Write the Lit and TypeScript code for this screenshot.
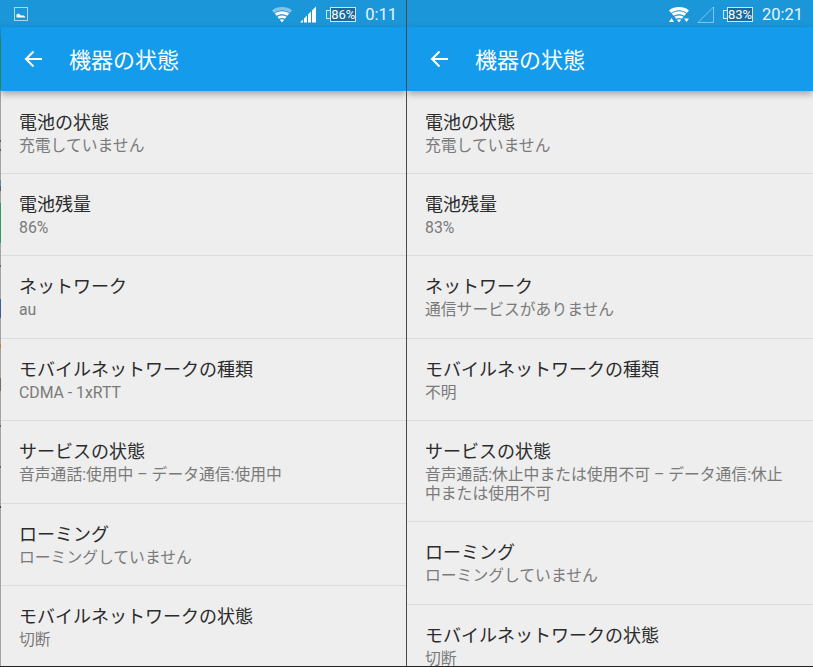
import { LitElement, html, css, svg } from 'lit';
import { customElement, property } from 'lit/decorators.js';

interface Row {
  title: string;
  value: string;
}

const LEFT: Row[] = [
  { title: '電池の状態', value: '充電していません' },
  { title: '電池残量', value: '86%' },
  { title: 'ネットワーク', value: 'au' },
  { title: 'モバイルネットワークの種類', value: 'CDMA - 1xRTT' },
  { title: 'サービスの状態', value: '音声通話:使用中 – データ通信:使用中' },
  { title: 'ローミング', value: 'ローミングしていません' },
  { title: 'モバイルネットワークの状態', value: '切断' },
];

const RIGHT: Row[] = [
  { title: '電池の状態', value: '充電していません' },
  { title: '電池残量', value: '83%' },
  { title: 'ネットワーク', value: '通信サービスがありません' },
  { title: 'モバイルネットワークの種類', value: '不明' },
  { title: 'サービスの状態', value: '音声通話:休止中または使用不可 – データ通信:休止中または使用不可' },
  { title: 'ローミング', value: 'ローミングしていません' },
  { title: 'モバイルネットワークの状態', value: '切断' },
];

const wifiBands = svg`
  <path d="M3.8 8.6C8 5.6 14 5.6 18.2 8.6L16.4 10.8C13 8.6 9 8.6 5.6 10.8Z" fill="#fff"/>
  <path d="M6.4 11.8C9.2 10 12.8 10 15.6 11.8L14 13.8C12 12.6 10 12.6 8 13.8Z" fill="#fff"/>
  <path d="M8.8 14.8C10.2 14 11.8 14 13.2 14.8L11 17.6Z" fill="#fff"/>`;

@customElement('status-screen')
export class StatusScreen extends LitElement {
  static styles = css`
    :host {
      display: block;
      position: relative;
      height: 667px;
      overflow: hidden;
      background: #eeeeee;
      font-family: Roboto, 'Noto Sans CJK JP', sans-serif;
      border-left: 1px solid #4a4a4a;
      border-bottom: 1px solid #222;
      box-sizing: border-box;
    }

    :host([first]) {
      border-left: none;
      padding-left: 1px;
    }

    :host([first]) .status {
      padding-right: 9px;
    }

    /* sliver of the picture behind the left screenshot */
    .edge {
      position: absolute;
      left: 0;
      top: 0;
      bottom: 0;
      width: 1px;
      background: linear-gradient(
        to bottom,
        #1a96d9 0 38px,
        #2f9a63 38px 90px,
        #a2a2a2 90px 140px,
        #6b5a50 140px 142px,
        #a2a2a2 142px 149px,
        #6b5a50 149px 151px,
        #a2a2a2 151px 180px,
        #5c88a8 180px 186px,
        #55606a 186px 191px,
        #a2a2a2 191px 203px,
        #2f9a63 203px 243px,
        #a2a2a2 243px 265px,
        #5c6470 265px 267px,
        #a2a2a2 267px 299px,
        #3f5f9c 299px 318px,
        #a2a2a2 318px 344px,
        #c08040 344px 348px,
        #a2a2a2 348px 378px,
        #7a6a60 378px 391px,
        #a2a2a2 391px 425px,
        #5c6470 425px 427px,
        #a2a2a2 427px 466px,
        #5c6470 466px 468px,
        #a2a2a2 468px 506px,
        #404040 506px 508px,
        #a2a2a2 508px
      );
    }

    .status {
      height: 27px;
      background: #1a96d9;
      display: flex;
      align-items: center;
      color: #e8f4fb;
      font-size: 16.5px;
      padding: 1px 10px 0 13px;
      box-sizing: border-box;
    }

    .pic {
      display: block;
    }

    .spacer {
      flex: 1;
    }

    .wifi {
      margin-right: 7px;
    }

    .signal {
      margin-right: 9px;
    }

    .battery {
      display: flex;
      align-items: center;
      margin-right: 9px;
    }

    .battery .nub {
      width: 4px;
      height: 9px;
      border: 1px solid #cfe6f4;
      border-right: none;
      box-sizing: border-box;
    }

    .battery .body {
      width: 26px;
      height: 15px;
      box-sizing: border-box;
      border: 1px solid #cfe6f4;
      background: #1c6a9b;
      font-size: 13px;
      line-height: 13px;
      text-align: center;
      color: #fff;
    }

    .bar {
      height: 64px;
      background: #149beb;
      display: flex;
      align-items: center;
      color: #fff;
      font-size: 22px;
      padding: 0 0 2px 23px;
      box-sizing: border-box;
      box-shadow: 0 3px 7px rgba(0, 0, 0, 0.32);
      position: relative;
    }

    .bar svg {
      margin: 2px 26px 0 0;
    }

    .list {
      padding-top: 0.6px;
    }

    .row {
      padding: 19px 18px 17.8px;
      border-bottom: 1px solid #dcdcdc;
    }

    .title {
      font-size: 18px;
      line-height: 24px;
      color: #2b2b2b;
    }

    .value {
      font-size: 15.8px;
      line-height: 18.6px;
      margin-top: 2px;
      color: #7a7a7a;
    }
  `;

  @property({ type: Array }) rows: Row[] = [];
  @property({ type: String }) time = '';
  @property({ type: String }) level = '';
  @property({ type: Boolean }) first = false;
  @property({ type: Boolean }) noService = false;

  render() {
    return html`
      ${this.first ? html`<div class="edge"></div>` : ''}
      <div class="status">
        ${this.noService
          ? ''
          : html`<svg class="pic" width="14" height="14" viewBox="0 0 14 14">
              <rect x="0.5" y="0.5" width="13" height="13" fill="none" stroke="#a8d8f2"/>
              <path d="M2.5 10.5V7.5L4.5 6.5L7 8.5L10 8.5L11.5 10.5Z" fill="#fff"/>
            </svg>`}
        <span class="spacer"></span>
        ${this.noService
          ? html`<svg class="wifi" width="22" height="18" viewBox="0 0 22 18">
              <path d="M1 5.4C6.5 1 15.5 1 21 5.4L18.8 8C14 4.4 8 4.4 3.2 8Z" fill="#fff"/>
              ${wifiBands}
              <path d="M3.5 13L6 17H1Z" fill="#fff"/>
              <path d="M16 13.5H21L18.5 17Z" fill="#fff"/>
            </svg>`
          : html`<svg class="wifi" width="22" height="18" viewBox="0 0 22 18">
              <path d="M1 5.4C6.5 1 15.5 1 21 5.4L18.8 8C14 4.4 8 4.4 3.2 8Z" fill="#fff" fill-opacity="0.45"/>
              ${wifiBands}
            </svg>`}
        ${this.noService
          ? html`<svg class="signal" width="17" height="17" viewBox="0 0 17 17">
              <path d="M1 16.5L16.5 1V16.5Z" fill="none" stroke="#fff" stroke-opacity="0.45"/>
            </svg>`
          : html`<svg class="signal" width="17" height="17" viewBox="0 0 17 17">
              <path d="M0 16.5L3 13.5V16.5ZM4 16.5V12.5L7 9.5V16.5ZM8 16.5V8.5L11 5.5V16.5ZM12 16.5V4.5L16 0.5V16.5Z" fill="#fff"/>
            </svg>`}
        <span class="battery"><span class="nub"></span><span class="body">${this.level}</span></span>
        <span>${this.time}</span>
      </div>
      <div class="bar">
        <svg width="19" height="18" viewBox="0 0 19 18" fill="none" stroke="#fff" stroke-width="2">
          <path d="M18 9H2M9.5 1.5L2 9L9.5 16.5"/>
        </svg>
        機器の状態
      </div>
      <div class="list">
        ${this.rows.map(
          (r) => html`
            <div class="row">
              <div class="title">${r.title}</div>
              <div class="value">${r.value}</div>
            </div>
          `
        )}
      </div>
    `;
  }
}

@customElement('app-root')
export class AppRoot extends LitElement {
  static styles = css`
    :host {
      display: grid;
      grid-template-columns: 406px 407px;
      width: 813px;
      height: 667px;
      overflow: hidden;
      background: #eeeeee;
    }
  `;

  render() {
    return html`
      <status-screen first .rows=${LEFT} time="0:11" level="86%"></status-screen>
      <status-screen .rows=${RIGHT} time="20:21" level="83%" noService></status-screen>
    `;
  }
}

declare global {
  interface HTMLElementTagNameMap {
    'app-root': AppRoot;
    'status-screen': StatusScreen;
  }
}
